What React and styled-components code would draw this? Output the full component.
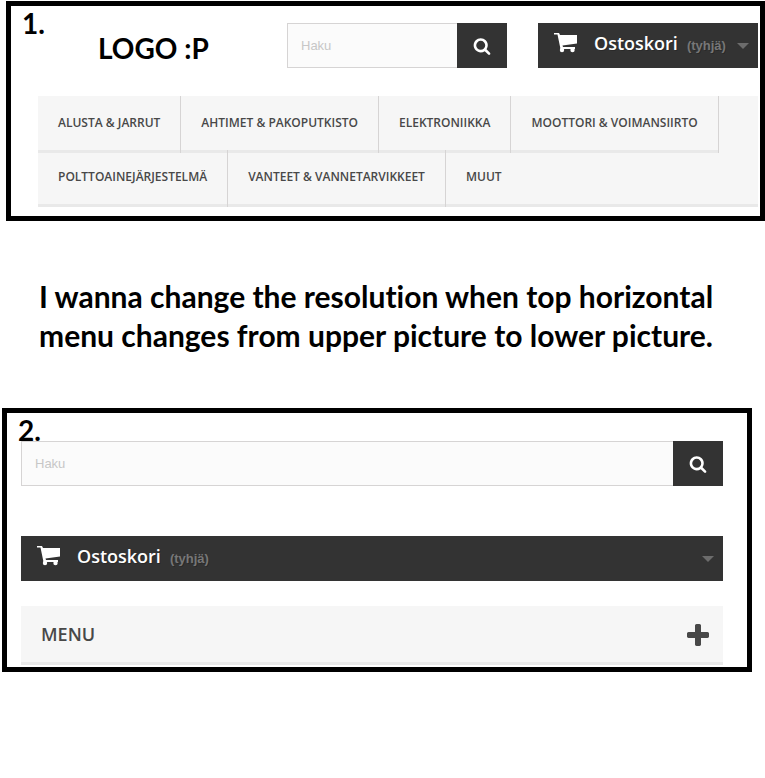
import React from 'react';
import styled, { createGlobalStyle } from 'styled-components';

const GlobalStyle = createGlobalStyle`
  * {
    box-sizing: border-box;
  }

  body {
    margin: 0;
    background: #fff;
    font-family: 'Liberation Sans', Arial, sans-serif;
    font-size: 13px;
  }
`;

const Page = styled.main`
  padding: 1px 0 0 2px;
`;

const Panel = styled.section`
  position: relative;
  border: 5px solid #000;
  margin: ${prop => prop.$margin};
  padding: ${prop => prop.$padding};
`;

const Step = styled.span`
  position: absolute;
  top: 0;
  left: 11px;
  z-index: 1;
  font: 700 28px/34px Lato, sans-serif;
`;

const Header = styled.header`
  display: grid;
  grid-template-columns: 1fr 220px 220px;
  gap: 31px;
  margin-bottom: 28px;
`;

const Logo = styled.div`
  padding: 8px 0 0 60px;
  font: 700 28px/34px Lato, sans-serif;
  white-space: nowrap;
`;

const SearchForm = styled.form`
  display: flex;
  height: 45px;

  input {
    flex: 1;
    min-width: 0;
    padding: 0 13px;
    border: 1px solid #d6d4d4;
    border-right: 0;
    border-radius: 0;
    background: #fbfbfb;
    color: #686666;
    font: 13px 'Liberation Sans', Arial, sans-serif;
    outline: none;
  }

  input::placeholder {
    color: #c7c7c7;
    opacity: 1;
  }

  button {
    display: flex;
    align-items: center;
    justify-content: center;
    width: 50px;
    padding: 0;
    border: 0;
    background: #333;
    color: #fff;
    cursor: pointer;
  }
`;

const CartLink = styled.a`
  display: flex;
  height: 45px;
  padding: 0 9px 0 16px;
  background: #333;
  color: #777;
  text-decoration: none;
  text-shadow: 1px 1px rgba(0, 0, 0, 0.2);

  strong {
    margin: 0 9px 0 17px;
    color: #fff;
    font: 600 18px/41px 'Open Sans', sans-serif;
  }

  span {
    flex: 1;
    font-weight: 700;
    line-height: 45px;
  }
`;

const CartIcon = styled.svg`
  width: 23px;
  height: 20px;
  margin-top: 10px;
`;

const Caret = styled.svg`
  width: 12px;
  height: 7px;
  margin-top: 20px;
`;

const Menu = styled.ul`
  display: flex;
  flex-wrap: wrap;
  margin: 0;
  padding: 0;
  border-bottom: 3px solid #e9e9e9;
  background: #f6f6f6;
  list-style: none;

  li {
    margin-bottom: -3px;
    border-right: 1px solid #d6d4d4;
  }

  li:last-child {
    border-right: 0;
  }

  a {
    display: block;
    padding: 16px 20px;
    border-bottom: 3px solid #e9e9e9;
    color: #484848;
    font: 600 12px/22px 'Open Sans', sans-serif;
    text-decoration: none;
    text-transform: uppercase;
  }
`;

const Note = styled.p`
  margin: 56px 0 53px 37px;
  font: 700 30px/39px Lato, sans-serif;
  font-variant-ligatures: none;
`;

const CartRow = styled.div`
  margin: 50px 0 25px;
`;

const MenuToggle = styled.button`
  display: flex;
  align-items: center;
  justify-content: space-between;
  width: 100%;
  height: 59px;
  padding: 0 11px 0 20px;
  border: 0;
  border-bottom: 3px solid #e9e9e9;
  background: #f6f6f6;
  color: #484848;
  font: 600 18px/22px 'Open Sans', sans-serif;
  cursor: pointer;
`;

const categories = [
  'Alusta & jarrut',
  'Ahtimet & pakoputkisto',
  'Elektroniikka',
  'Moottori & voimansiirto',
  'Polttoainejärjestelmä',
  'Vanteet & vannetarvikkeet',
  'Muut',
];

function Search() {
  return (
    <SearchForm onSubmit={e => e.preventDefault()}>
      <input type="text" placeholder="Haku" aria-label="Haku" />
      <button type="submit" aria-label="Haku">
        <svg width="18" height="18" viewBox="0 0 1792 1792" fill="currentColor">
          <path d="M1216 832q0-185-131.5-316.5t-316.5-131.5-316.5 131.5-131.5 316.5 131.5 316.5 316.5 131.5 316.5-131.5 131.5-316.5zm512 832q0 52-38 90t-90 38q-54 0-90-38l-343-342q-179 124-399 124-143 0-273.5-55.5t-225-150-150-225-55.5-273.5 55.5-273.5 150-225 225-150 273.5-55.5 273.5 55.5 225 150 150 225 55.5 273.5q0 220-124 399l343 343q37 37 37 90z" />
        </svg>
      </button>
    </SearchForm>
  );
}

function Cart() {
  return (
    <CartLink href="#cart">
      <CartIcon viewBox="0 0 23 20" fill="#fff">
        <path d="M0 0h5l1 2h17v8.500L8.500 12.500l.5 1.500H21v2H6.500L3.500 1.500H0z" />
        <circle cx="8" cy="17" r="2.200" />
        <circle cx="18.500" cy="17" r="2.200" />
      </CartIcon>
      <strong>Ostoskori</strong>
      <span>(tyhjä)</span>
      <Caret viewBox="0 0 12 7" fill="#6c6c6c">
        <path d="M0 0h12L6 6z" />
      </Caret>
    </CartLink>
  );
}

function App() {
  return (
    <Page>
      <GlobalStyle />
      <Panel $margin="0 0 0 4px" $padding="17px 2px 9px 27px">
        <Step>1.</Step>
        <Header>
          <Logo>LOGO :P</Logo>
          <Search />
          <Cart />
        </Header>
        <nav>
          <Menu>
            {categories.map(name => (
              <li key={name}>
                <a href="#category">{name}</a>
              </li>
            ))}
          </Menu>
        </nav>
      </Panel>
      <Note>
        I wanna change the resolution when top horizontal
        <br />
        menu changes from upper picture to lower picture.
      </Note>
      <Panel $margin="0 13px 0 0" $padding="28px 24px 2px 14px">
        <Step>2.</Step>
        <Search />
        <CartRow>
          <Cart />
        </CartRow>
        <MenuToggle type="button">
          MENU
          <svg width="28" height="28" viewBox="0 -128 1792 1792" fill="currentColor">
            <path d="M1600 736v192q0 40-28 68t-68 28h-416v416q0 40-28 68t-68 28h-192q-40 0-68-28t-28-68v-416h-416q-40 0-68-28t-28-68v-192q0-40 28-68t68-28h416v-416q0-40 28-68t68-28h192q40 0 68 28t28 68v416h416q40 0 68 28t28 68z" />
          </svg>
        </MenuToggle>
      </Panel>
    </Page>
  );
}

export default App;
